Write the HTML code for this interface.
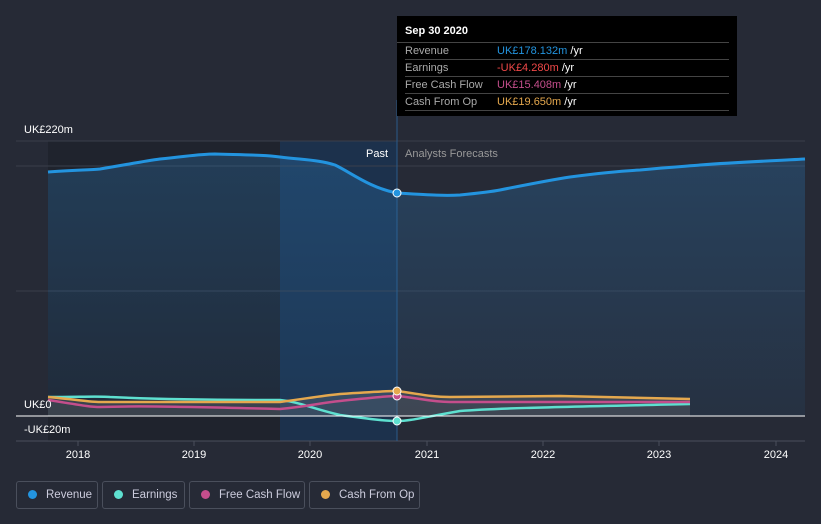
<!DOCTYPE html>
<html><head><style>
body{margin:0;width:821px;height:524px;background:#262a36;font-family:"Liberation Sans",sans-serif;overflow:hidden;position:relative}
.tt{position:absolute;left:397px;top:16px;width:340px;height:100px;background:#000;color:#fff;font-size:11px}
.tt .h{font-weight:bold;padding:9px 0 0 8px;height:17px;border-bottom:1px solid #444;margin:0 8px 0 0}
.tt .r{height:16px;line-height:16px;border-bottom:1px solid #444;margin:0 8px;display:flex}
.tt .r span:first-child{width:92px;color:#aaa}
.lg{position:absolute;top:481px;border:1px solid #4a4f5c;border-radius:3px;color:#ccd;font-size:11.5px;line-height:26px;box-sizing:border-box;height:28px;white-space:nowrap;overflow:hidden}
.lg i{display:inline-block;width:9px;height:9px;border-radius:50%;margin:0 9px 0 11px;vertical-align:-1px}
</style></head><body>
<svg width="821" height="524" style="position:absolute;left:0;top:0">
<defs><linearGradient id="g" x1="0" y1="0" x2="0" y2="1"><stop offset="0" stop-color="#2a6fa8" stop-opacity=".35"/><stop offset="1" stop-color="#2a6fa8" stop-opacity=".1"/></linearGradient></defs>
<rect x="48" y="141" width="349" height="300" fill="#1f232d"/>
<rect x="280" y="141" width="117" height="300" fill="#1c3454" opacity=".8"/>
<line x1="16" y1="141" x2="805" y2="141" stroke="#3a3f4b"/>
<line x1="16" y1="166" x2="805" y2="166" stroke="#3a3f4b"/>
<line x1="16" y1="291" x2="805" y2="291" stroke="#3a3f4b"/>
<line x1="16" y1="441" x2="805" y2="441" stroke="#4a4f5c"/>
<line x1="397" y1="100" x2="397" y2="441" stroke="#2a5a8a"/>
<path d="M48,172 C70,170 90,170 100,169 C130,164 145,161 160,159 C190,156 200,154 215,154 C250,155 265,155 280,157 C305,160 320,160 335,165 C350,172 370,188 397,193 C430,195 445,196 460,195 C480,193 490,192 500,190 C530,184 550,180 570,177 C600,173 620,171 640,170 C670,167 690,166 700,165 C740,162 770,161 805,159 L805,416 L48,416Z" fill="url(#g)"/>
<path d="M48,172 C70,170 90,170 100,169 C130,164 145,161 160,159 C190,156 200,154 215,154 C250,155 265,155 280,157 C305,160 320,160 335,165 C350,172 370,188 397,193 C430,195 445,196 460,195 C480,193 490,192 500,190 C530,184 550,180 570,177 C600,173 620,171 640,170 C670,167 690,166 700,165 C740,162 770,161 805,159" fill="none" stroke="#2394df" stroke-width="3"/>
<path d="M48,397 L110,402 L280,402 L330,395 L397,391 L450,397 L560,396 L690,399 L690,416 L48,416Z" fill="#888" opacity=".25"/>
<path d="M48,397 C80,397 100,396 110,397 C150,399 200,400 280,400 C300,402 310,408 340,415 C370,419 385,421 397,421 C410,421 420,418 460,411 C500,408 560,407 690,404" fill="none" stroke="#5ee0d0" stroke-width="2.5"/>
<path d="M48,400 C80,405 90,407 100,407 C130,406 160,406 280,409 C310,406 320,403 340,401 C370,398 385,396 397,396 C420,398 430,402 450,402 L690,402" fill="none" stroke="#c44e8c" stroke-width="2.5"/>
<path d="M48,397 C80,400 90,402 100,402 L280,402 C310,398 320,396 340,394 C370,392 385,391 397,391 C420,394 430,397 450,397 L560,396 C620,397 660,398 690,399" fill="none" stroke="#e5a84e" stroke-width="2.5"/>
<line x1="16" y1="416" x2="805" y2="416" stroke="#fff" stroke-width="1"/>
<circle cx="397" cy="193" r="4" fill="#2394df" stroke="#fff"/>
<circle cx="397" cy="421" r="4" fill="#5ee0d0" stroke="#fff"/>
<circle cx="397" cy="396" r="4" fill="#c44e8c" stroke="#fff"/>
<circle cx="397" cy="391" r="4" fill="#e5a84e" stroke="#fff"/>
<g font-size="11" fill="#fff">
<text x="24" y="133">UK£220m</text>
<text x="24" y="408">UK£0</text>
<text x="24" y="433">-UK£20m</text>
<text x="366" y="157">Past</text>
<text x="405" y="157" fill="#999">Analysts Forecasts</text>
<g text-anchor="middle"><text x="78" y="458">2018</text><text x="194" y="458">2019</text><text x="310" y="458">2020</text><text x="427" y="458">2021</text><text x="543" y="458">2022</text><text x="659" y="458">2023</text><text x="776" y="458">2024</text></g>
</g>
<g stroke="#4a4f5c"><line x1="78" y1="441" x2="78" y2="446"/><line x1="194" y1="441" x2="194" y2="446"/><line x1="310" y1="441" x2="310" y2="446"/><line x1="427" y1="441" x2="427" y2="446"/><line x1="543" y1="441" x2="543" y2="446"/><line x1="659" y1="441" x2="659" y2="446"/><line x1="776" y1="441" x2="776" y2="446"/></g>
</svg>
<div class="tt"><div class="h">Sep 30 2020</div>
<div class="r"><span>Revenue</span><span><b style="font-weight:normal;color:#2394df">UK£178.132m</b> /yr</span></div>
<div class="r"><span>Earnings</span><span><b style="font-weight:normal;color:#f04848">-UK£4.280m</b> /yr</span></div>
<div class="r"><span>Free Cash Flow</span><span><b style="font-weight:normal;color:#c44e8c">UK£15.408m</b> /yr</span></div>
<div class="r"><span>Cash From Op</span><span><b style="font-weight:normal;color:#e5a84e">UK£19.650m</b> /yr</span></div>
</div>
<div class="lg" style="left:16px;width:82px"><i style="background:#2394df"></i>Revenue</div>
<div class="lg" style="left:102px;width:83px"><i style="background:#5ee0d0"></i>Earnings</div>
<div class="lg" style="left:189px;width:116px"><i style="background:#c44e8c"></i>Free Cash Flow</div>
<div class="lg" style="left:309px;width:111px"><i style="background:#e5a84e"></i>Cash From Op</div>
</body></html>
